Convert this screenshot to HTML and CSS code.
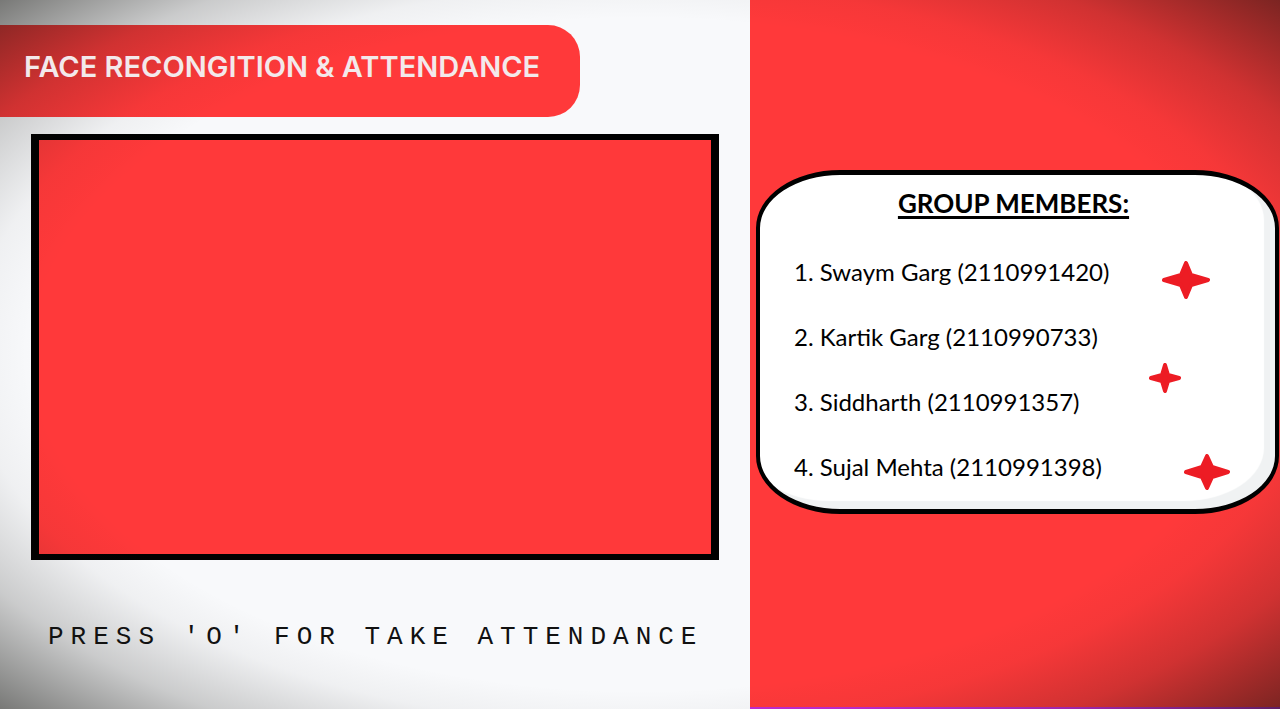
FILE: index.html
```html
<!DOCTYPE html>
<html lang="en">
<head>
<meta charset="utf-8">
<title>Face Recongition &amp; Attendance</title>
<link rel="stylesheet" href="styles.css">
</head>
<body>
<main class="screen">
  <section class="capture">
    <h1 class="banner"><span class="banner-text">FACE RECONGITION &amp; ATTENDANCE</span></h1>
    <div class="camera"></div>
    <p class="prompt">PRESS 'O' FOR TAKE ATTENDANCE</p>
  </section>
  <aside class="side">
    <div class="card">
      <h2 class="card-title">GROUP MEMBERS:</h2>
      <ol class="members">
        <li>1. Swaym Garg (2110991420)</li>
        <li>2. Kartik Garg (2110990733)</li>
        <li>3. Siddharth (2110991357)</li>
        <li>4. Sujal Mehta (2110991398)</li>
      </ol>
      <svg class="star star-one" viewBox="0 0 48 38" aria-hidden="true"><path d="M24 2L29 14L46 19L29 24L24 36L19 24L2 19L19 14Z"/></svg>
      <svg class="star star-two" viewBox="0 0 32 30" aria-hidden="true"><path d="M16 2L19 12L30 15L19 18L16 28L13 18L2 15L13 12Z"/></svg>
      <svg class="star star-three" viewBox="0 0 46 36" aria-hidden="true"><path d="M23 2L28 13L44 18L28 23L23 34L18 23L2 18L18 13Z"/></svg>
    </div>
  </aside>
</main>
</body>
</html>
```
FILE: styles.css
```css
* { box-sizing: border-box; }

body { margin: 0; }

.screen {
  position: relative;
  display: grid;
  grid-template-columns: 750fr 530fr;
  min-height: 100vh;
  background: #f8f9fb;
}

/* darkened corners over the whole screen */
.screen::after {
  content: "";
  position: absolute;
  inset: 0;
  pointer-events: none;
  background: radial-gradient(ellipse farthest-corner at center,
    rgba(20, 20, 15, 0) 67%, rgba(20, 20, 15, 0.04) 74%,
    rgba(20, 20, 15, 0.2) 85%, rgba(20, 20, 15, 0.56) 100%);
}

.capture {
  display: flex;
  flex-direction: column;
  min-width: 0;
  padding-top: 25px;
}

.banner {
  width: 580px;
  max-width: 100%;
  margin: 0 0 17px;
  padding: 22px 24px 30px;
  border-radius: 0 32px 32px 0;
  background: #ff393a;
  color: #f3e9eb;
  font: 600 29px/40px Inter, sans-serif;
  white-space: nowrap;
}

.banner-text {
  position: relative;
  z-index: 1;
}

.camera {
  flex: 1;
  margin: 0 31px;
  border: solid #000;
  border-width: 6px 8px;
  background: #ff393a;
}

.prompt {
  margin: 0;
  padding: 61px 0 56px 48px;
  color: #111;
  font: 26px/32px "Liberation Mono", monospace;
  letter-spacing: 7px;
  white-space: nowrap;
}

.side {
  display: flex;
  align-items: center;
  min-width: 0;
  padding: 0 1px 23px 6px;
  border-bottom: 2px solid #c02bd0;
  background: #ff393a;
}

.card {
  position: relative;
  z-index: 1;
  flex: 1;
  padding: 10px 34px 24px;
  border: solid #000;
  border-width: 5px 4px;
  border-radius: 84px / 58px;
  background: #fff;
  box-shadow: inset -11px -8px 1px #f0f2f3;
  color: #000;
  font-family: Lato, sans-serif;
}

.card-title {
  margin: 0 8px 33px 0;
  font-size: 26px;
  line-height: 36px;
  text-align: center;
  text-decoration: underline;
  text-decoration-thickness: 3px;
  text-underline-offset: 3px;
  text-decoration-skip-ink: none;
}

.members {
  display: grid;
  gap: 29px;
  margin: 0;
  padding: 0;
  list-style: none;
  font-size: 24px;
  line-height: 36px;
}

.star {
  position: absolute;
  fill: #ed1c24;
  stroke: #ed1c24;
  stroke-width: 4px;
  stroke-linejoin: round;
}

.star-one { top: 86px; right: 65px; width: 48px; }
.star-two { top: 188px; right: 94px; width: 32px; }
.star-three { top: 279px; right: 45px; width: 46px; }
```
